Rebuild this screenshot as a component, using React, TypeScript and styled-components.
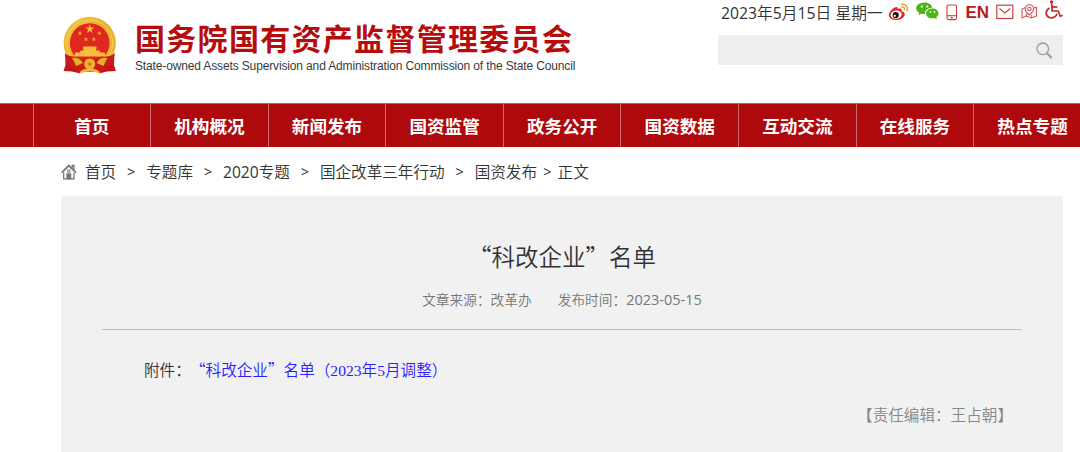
import { Fragment } from "react";
import styled, { createGlobalStyle } from "styled-components";

const navItems = [
  "首页",
  "机构概况",
  "新闻发布",
  "国资监管",
  "政务公开",
  "国资数据",
  "互动交流",
  "在线服务",
  "热点专题",
];

const starPoints = (cx: number, cy: number, r: number) =>
  Array.from({ length: 10 }, (_, i) => {
    const radius = i % 2 ? r * 0.4 : r;
    const angle = (Math.PI / 5) * i - Math.PI / 2;
    return `${cx + radius * Math.cos(angle)},${cy + radius * Math.sin(angle)}`;
  }).join(" ");

const Emblem = () => (
  <svg width="56" height="60" viewBox="0 0 56 60">
    <defs>
      <linearGradient id="gold" x1="0" y1="0" x2="1" y2="1">
        <stop offset="0" stopColor="#f6c844" />
        <stop offset="0.5" stopColor="#e9b02c" />
        <stop offset="1" stopColor="#efb932" />
      </linearGradient>
    </defs>
    <path d="M3 38 L9 42 L20 53 L18 58.5 L10 56.5 L1.5 56 L3.500 50 Z" fill="#c4161a" />
    <path d="M52.5 38 L46 42 L35 53 L37 58.5 L45 56.5 L54 56 L52 50 Z" fill="#c4161a" />
    <circle cx="27.7" cy="28" r="26.2" fill="url(#gold)" />
    <circle cx="27.7" cy="28" r="23" fill="none" stroke="#f5cf55" strokeWidth="1" />
    <circle cx="27.7" cy="28" r="19.8" fill="#df2620" />
    <polygon points={starPoints(27.8, 14, 4.8)} fill="#f3b536" />
    <polygon points={starPoints(18, 18.4, 2.4)} fill="#f3b536" />
    <polygon points={starPoints(37.4, 18.4, 2.4)} fill="#f3b536" />
    <polygon points={starPoints(23.9, 24.2, 2.4)} fill="#f3b536" />
    <polygon points={starPoints(31.8, 24.2, 2.4)} fill="#f3b536" />
    <path d="M21.5 31.5 h12.5 l1 2 h-1 v2 h3 l1.5 2 h4 l1.5 4 h-32 l1.5 -4 h4 l1.5 -2 h2.5 v-2 h-1 Z" fill="#f5bf3d" />
    <path d="M3 39 Q8 42 14 42 L24 45 L31 45 L41 42 Q47 42 52.5 39 L50 49 L38 57 L17 57 L6 49 Z" fill="#cb1b1b" />
    <path d="M10 43 Q18 42 21 48 L14 51 Q12 46 10 43 Z" fill="#e9ad2f" />
    <path d="M45.5 43 Q37.5 42 34.5 48 L41.5 51 Q43.5 46 45.5 43 Z" fill="#e9ad2f" />
    <circle cx="27.7" cy="49" r="5.5" fill="#efb42f" />
    <circle cx="27.7" cy="49" r="1.7" fill="#d9681f" />
    <path d="M17 58.5 Q20 53 27.7 54 Q35.5 53 38.5 58.5 L32 57 Q27.7 56 23.5 57 Z" fill="#f0b737" />
  </svg>
);

const WeiboIcon = () => (
  <svg width="21" height="18" viewBox="0 0 21 18">
    <path
      d="M7.5 4.2 C9 3.7 9.9 4.6 9.5 6 C12.5 5 14.2 5.6 13.5 7.9 C16 8.7 17.3 10.2 16.6 12.3 C15.5 15.5 11.8 17.2 7.8 17 C3.5 16.8 0.5 14.6 0.8 11.8 C1.1 8.9 4.8 5 7.5 4.2 Z"
      fill="#e1251f"
    />
    <ellipse cx="8.2" cy="11.6" rx="5.6" ry="4.1" fill="#fff" transform="rotate(-8 8.2 11.6)" />
    <circle cx="7.7" cy="12" r="3.1" fill="#1d1515" />
    <circle cx="6.8" cy="12.8" r="1.1" fill="#fff" />
    <path d="M13.5 1.3 C17.5 0.6 20.2 3.8 19 7.6" fill="none" stroke="#eda13c" strokeWidth="1.6" strokeLinecap="round" />
    <path d="M13.7 4 C15.7 3.6 17 5 16.5 6.9" fill="none" stroke="#eda13c" strokeWidth="1.4" strokeLinecap="round" />
  </svg>
);

const WechatIcon = () => (
  <svg width="23" height="18" viewBox="0.5 0 23 18">
    <path d="M9 0.5 C13.3 0.5 16.3 2.9 16.9 5.7 C12.3 5.5 8.8 8.6 9.6 12 C8.3 12.2 7 12 5.8 11.7 L3 13.3 L3.7 10.7 C1.7 9.5 0.6 7.9 0.6 6.1 C0.6 3 4.4 0.5 9 0.5 Z" fill="#48b712" />
    <path d="M16.8 6.4 C20.4 6.4 23 8.7 23 11.3 C23 12.9 22.1 14.2 20.8 15.1 L21.3 17.3 L18.9 16 C14.5 17 10.6 14.8 10.6 11.4 C10.6 8.7 13.4 6.4 16.8 6.4 Z" fill="#48b712" />
    <circle cx="6.3" cy="4.6" r="1.1" fill="#fff" />
    <circle cx="11.7" cy="4.6" r="1.1" fill="#fff" />
    <circle cx="14.9" cy="9.9" r="0.9" fill="#fff" />
    <circle cx="19" cy="9.9" r="0.9" fill="#fff" />
  </svg>
);

const PhoneIcon = () => (
  <svg width="12" height="17" viewBox="0 0 12 17" fill="none" stroke="#c9423f" strokeWidth="1.1">
    <rect x="1" y="1" width="9.5" height="14.6" rx="1.5" />
    <path d="M1 11.7 H10.5" />
    <circle cx="5.8" cy="13.7" r="0.5" />
  </svg>
);

const MailIcon = () => (
  <svg width="18" height="16" viewBox="0 0 18 16" fill="none" stroke="#c9423f" strokeWidth="1.2">
    <rect x="0.8" y="1.2" width="16" height="13.3" />
    <path d="M3.5 4.5 L8.8 9 L14.2 4.5" />
  </svg>
);

const MapIcon = () => (
  <svg width="17" height="15" viewBox="0 0 17 15" fill="none" stroke="#cf5552" strokeWidth="1.1">
    <path d="M4 3.8 L1 5 V14 L5.3 12 L10.7 14 L15.5 12 V3.2 L13 4" />
    <path d="M8.3 11 C5.5 8.5 4.2 6.8 4.2 4.9 C4.2 2.5 6 0.8 8.4 0.8 C10.8 0.8 12.6 2.5 12.6 4.9 C12.6 6.8 11.2 8.5 8.3 11 Z" />
    <circle cx="8.4" cy="4.9" r="1.7" />
    <path d="M5.3 9.5 V12 M10.7 11 V14" />
  </svg>
);

const WheelchairIcon = () => (
  <svg width="18" height="19" viewBox="0 0 18 19" fill="none" stroke="#c02a28" strokeWidth="1.7">
    <circle cx="6.5" cy="2" r="1.7" fill="#c02a28" stroke="none" />
    <path d="M6.7 3.5 L7.1 11 H13.2 L15.3 16.2 L17.6 15.3" />
    <path d="M7 7 H12.3" />
    <path d="M4.6 8 C0.3 10.1 0 15.4 3.9 17.2 C7.5 18.8 11.4 17 12 13.7" />
  </svg>
);

const SearchIcon = () => (
  <svg width="17" height="17" viewBox="0 0 17 17" fill="none" stroke="#9a9a9a" strokeWidth="1.3">
    <circle cx="6.8" cy="6.8" r="5.8" />
    <path d="M11 11.2 L15.7 16" strokeWidth="2" />
  </svg>
);

const HomeIcon = () => (
  <svg width="16" height="16" viewBox="0 0 16 16" fill="none" stroke="#777" strokeWidth="1.3">
    <path d="M0.7 8.7 L7.8 1.6 L15 8.7" strokeWidth="1.8" />
    <path d="M2.7 8.5 V14.8 H13 V8.5" />
    <path d="M11.2 4.5 V1.5 H13 V6" />
    <rect x="6" y="10" width="3.6" height="4.8" fill="#777" />
    <rect x="6.7" y="6" width="2.2" height="2.2" strokeWidth="0.9" />
  </svg>
);

const tools = [
  { icon: <WeiboIcon />, top: 2.5 },
  { icon: <WechatIcon />, top: 1.5 },
  { icon: <PhoneIcon />, top: 3.5 },
  { icon: "EN", top: 1.5 },
  { icon: <MailIcon />, top: 3.5 },
  { icon: <MapIcon />, top: 4 },
  { icon: <WheelchairIcon />, top: 0 },
];

export default function App() {
  const crumbs = [
    <>首页</>,
    <>专题库</>,
    <><Latin>2020</Latin>专题</>,
    <>国企改革三年行动</>,
    <>国资发布</>,
  ];

  return (
    <>
      <GlobalStyle />
      <Page lang="zh-CN">
        <Header>
          <Brand>
            <Emblem />
            <BrandText>
              <BrandName>国务院国有资产监督管理委员会</BrandName>
              <BrandEnglish>
                State-owned Assets Supervision and Administration Commission of the State Council
              </BrandEnglish>
            </BrandText>
          </Brand>
          <Tools>
            <ToolRow>
              <DateText>
                <Latin>2023</Latin>年<Latin>5</Latin>月<Latin>15</Latin>日<Latin> </Latin>星期一
              </DateText>
              <IconRow>
                {tools.map(({ icon, top }, idx) => (
                  <Tool key={idx} $top={top}>{icon}</Tool>
                ))}
              </IconRow>
            </ToolRow>
            <SearchBar>
              <SearchIcon />
            </SearchBar>
          </Tools>
        </Header>
        <Nav>
          {navItems.map((item) => (
            <NavItem key={item}>{item}</NavItem>
          ))}
        </Nav>
        <Breadcrumb>
          <HomeIcon />
          {crumbs.map((crumb, idx) => (
            <Fragment key={idx}>
              <Crumb>{crumb}</Crumb>
              <Separator $last={idx === crumbs.length - 1}>&gt;</Separator>
            </Fragment>
          ))}
          <Crumb>正文</Crumb>
        </Breadcrumb>
        <Article>
          <Title>“科改企业”名单</Title>
          <Meta>
            <span>文章来源：改革办</span>
            <span>
              发布时间：<MetaDate>2023-05-15</MetaDate>
            </span>
          </Meta>
          <Attachment>
            附件：
            <AttachmentLink>
              “科改企业”名单（<SerifLatin>2023</SerifLatin>年<SerifLatin>5</SerifLatin>月调整）
            </AttachmentLink>
          </Attachment>
          <Editor>【责任编辑：王占朝】</Editor>
        </Article>
      </Page>
    </>
  );
}

const GlobalStyle = createGlobalStyle`
  * {
    box-sizing: border-box;
  }

  body {
    margin: 0;
    background: #fff;
    overflow: hidden;
  }

  svg {
    display: block;
    flex-shrink: 0;
  }
`;

const Page = styled.div`
  width: 1080px;
  height: 452px;
  overflow: hidden;
  display: flex;
  flex-direction: column;
  color: #333;
  font-family: "Noto Sans CJK SC", sans-serif;
  font-weight: 350;
  white-space: nowrap;
`;

const Latin = styled.span`
  font-family: "Open Sans", sans-serif;
  font-weight: 400;
`;

const Header = styled.header`
  height: 103px;
  flex-shrink: 0;
  padding: 0 17px 0 62px;
  display: flex;
  justify-content: space-between;
`;

const Brand = styled.div`
  display: flex;
  gap: 17px;
  padding-top: 15px;
`;

const BrandText = styled.div`
  padding-top: 4px;
`;

const BrandName = styled.div`
  color: #b60c0e;
  font-size: 30px;
  font-weight: 700;
  line-height: 36px;
  letter-spacing: 1.3px;
`;

const BrandEnglish = styled.div`
  margin-top: 3px;
  color: #3a3a3a;
  font-family: "Liberation Sans", Arial, sans-serif;
  font-size: 12px;
  font-weight: 400;
  line-height: 16px;
  letter-spacing: -0.14px;
`;

const Tools = styled.div`
  width: 345px;
`;

const ToolRow = styled.div`
  height: 35px;
  padding-left: 3px;
  display: flex;
  justify-content: space-between;
`;

const DateText = styled.div`
  font-size: 15.75px;
  line-height: 26px;
`;

const IconRow = styled.div`
  height: 22px;
  display: flex;
  gap: 7px;
`;

const Tool = styled.div<{ $top: number }>`
  padding-top: ${({ $top }) => $top}px;
  color: #b5191b;
  font-family: "Liberation Sans", Arial, sans-serif;
  font-size: 17px;
  font-weight: 700;
  line-height: 22px;
`;

const SearchBar = styled.div`
  height: 30px;
  padding-right: 10px;
  display: flex;
  align-items: center;
  justify-content: flex-end;
  background: #eee;
`;

const Nav = styled.nav`
  height: 44px;
  flex-shrink: 0;
  padding-left: 32.5px;
  display: flex;
  background: #ae090c;
  border-top: 1px solid #c9595b;
`;

const NavItem = styled.div`
  width: 117.6px;
  flex-shrink: 0;
  border-left: 1px solid #cf6a6c;
  color: #fff;
  font-size: 17.6px;
  font-weight: 700;
  line-height: 43px;
  text-align: center;
`;

const Breadcrumb = styled.div`
  height: 49px;
  flex-shrink: 0;
  padding-left: 61px;
  display: flex;
  align-items: center;
  font-size: 15.6px;
  line-height: 49px;
`;

const Crumb = styled.span`
  &:first-of-type {
    margin-left: 8px;
  }
`;

const Separator = styled.span<{ $last: boolean }>`
  width: ${({ $last }) => ($last ? "20.5px" : "30px")};
  text-align: center;
  font-family: "Open Sans", sans-serif;
  font-size: 14.5px;
  font-weight: 400;
`;

const Article = styled.main`
  width: 1002px;
  height: 256px;
  margin-left: 61px;
  padding: 0 41px;
  background: #f1f1f1;
`;

const Title = styled.h1`
  margin: 0;
  padding-top: 38px;
  font-size: 23.5px;
  font-weight: 350;
  line-height: 44px;
  text-align: center;
`;

const Meta = styled.div`
  height: 52px;
  padding-top: 10px;
  display: flex;
  justify-content: center;
  gap: 26px;
  border-bottom: 1px solid #bfbfbf;
  color: #777;
  font-size: 13.7px;
  line-height: 22px;
`;

const MetaDate = styled(Latin)`
  font-size: 14.5px;
`;

const Attachment = styled.p`
  margin: 27px 0 0 42px;
  font-size: 15.6px;
  line-height: 24px;
`;

const AttachmentLink = styled.a`
  margin-left: 7px;
  color: #2a1dff;
`;

const SerifLatin = styled.span`
  font-family: "Liberation Serif", "Times New Roman", serif;
  font-weight: 400;
`;

const Editor = styled.div`
  margin-top: 19px;
  padding-right: 9px;
  color: #888;
  font-size: 15.6px;
  line-height: 24px;
  text-align: right;
`;
